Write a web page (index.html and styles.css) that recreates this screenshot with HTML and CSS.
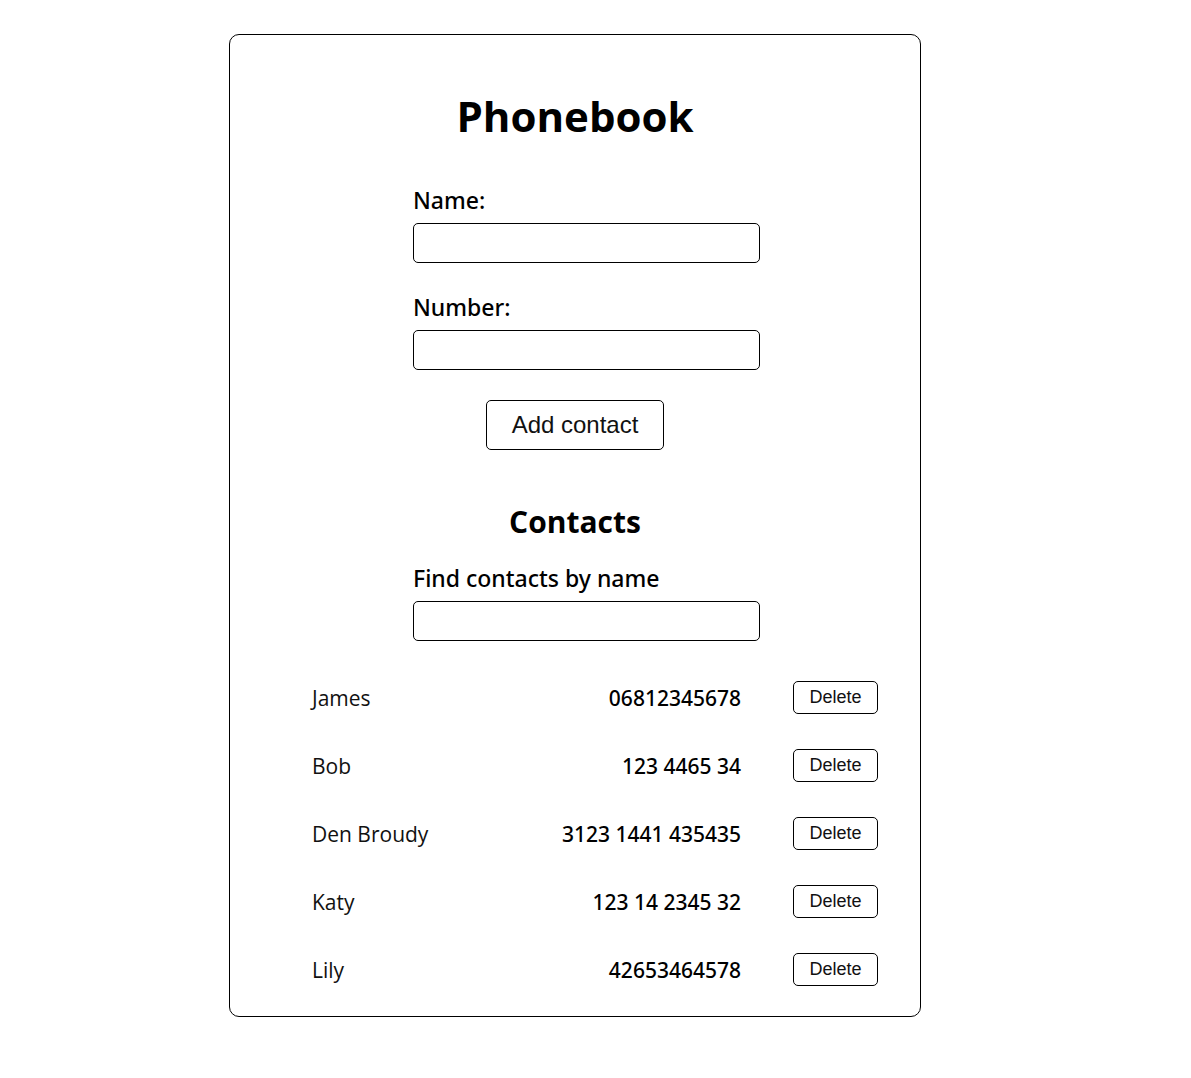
FILE: index.html
```
<!DOCTYPE html>
<html lang="en">
<head>
<meta charset="utf-8">
<meta name="viewport" content="width=device-width, initial-scale=1">
<title>Phonebook</title>
<link rel="stylesheet" href="styles.css">
</head>
<body>
<main class="phonebook">
  <h1 class="title">Phonebook</h1>
  <form class="form">
    <label class="label" for="name">Name:</label>
    <input class="input" id="name" type="text" name="name">
    <label class="label" for="number">Number:</label>
    <input class="input" id="number" type="tel" name="number">
    <button class="button add" type="button">Add contact</button>
  </form>
  <h2 class="subtitle">Contacts</h2>
  <div class="form">
    <label class="label" for="filter">Find contacts by name</label>
    <input class="input" id="filter" type="text" name="filter">
  </div>
  <ul class="list">
    <li class="item"><span class="name">James</span><span class="number">06812345678</span><button class="button delete" type="button">Delete</button></li>
    <li class="item"><span class="name">Bob</span><span class="number">123 4465 34</span><button class="button delete" type="button">Delete</button></li>
    <li class="item"><span class="name">Den Broudy</span><span class="number">3123 1441 435435</span><button class="button delete" type="button">Delete</button></li>
    <li class="item"><span class="name">Katy</span><span class="number">123 14 2345 32</span><button class="button delete" type="button">Delete</button></li>
    <li class="item"><span class="name">Lily</span><span class="number">42653464578</span><button class="button delete" type="button">Delete</button></li>
  </ul>
</main>
</body>
</html>
```
FILE: styles.css
```
* {
  box-sizing: border-box;
}

body {
  margin: 0;
  padding: 34px 57px 60px 16px;
  background: #fff;
  color: #000;
  font-family: "Segoe UI", "Open Sans", "Noto Sans", sans-serif;
}

.phonebook {
  max-width: 692px;
  margin: 0 auto;
  padding: 51px 42px 30px;
  border: 1px solid #000;
  border-radius: 10px;
}

.title {
  margin: 0 0 40px;
  font-size: 42px;
  line-height: 60px;
  font-weight: 700;
  text-align: center;
}

.form {
  display: flex;
  flex-direction: column;
  max-width: 370px;
  margin: 0 auto;
  padding-left: 23px;
}

.label,
.number {
  font-family: "Segoe UI", "Noto Sans", "Open Sans", sans-serif;
  font-weight: 500;
}

.label {
  margin-bottom: 8px;
  font-size: 23px;
  line-height: 29px;
}

.input {
  width: 100%;
  height: 40px;
  margin-bottom: 30px;
  padding: 0 12px;
  border: 1px solid #000;
  border-radius: 5px;
  background: #fff;
  font: inherit;
  font-size: 20px;
}

.button {
  border: 1px solid #000;
  border-radius: 5px;
  background: #fff;
  color: #111;
  font-family: Arial, "Liberation Sans", sans-serif;
}

.add {
  align-self: center;
  height: 50px;
  margin-right: 23px;
  padding: 0 25px;
  font-size: 24px;
}

.subtitle {
  margin: 50px 0 20px;
  font-size: 30px;
  line-height: 44px;
  font-weight: 700;
  text-align: center;
}

.list {
  display: grid;
  gap: 35px;
  margin: 10px 0 0;
  padding: 0 0 0 40px;
  list-style: none;
}

.item {
  display: flex;
  align-items: center;
  height: 33px;
  font-size: 21px;
}

.name {
  color: #111;
  font-weight: 400;
}

.number {
  margin-left: auto;
  margin-right: 52px;
}

.delete {
  width: 85px;
  height: 33px;
  padding: 0;
  font-size: 18px;
}
```
